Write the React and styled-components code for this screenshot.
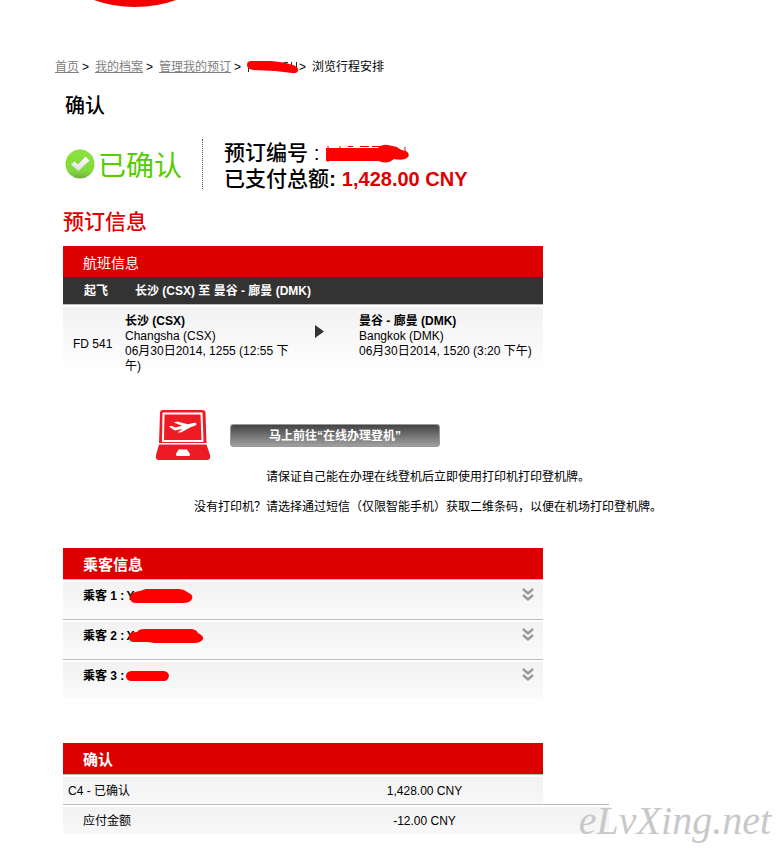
import React, { useState } from 'react'
import styled, { createGlobalStyle } from 'styled-components'

const passengers = [
  { id: 1, width: 66, height: 16, initial: 'Y', path: 'M8 15 Q2 15 2 9 Q3 4 12 3 L18 1 H50 Q56 1 59 4 Q66 7 64 11 Q62 15 55 15Z' },
  { id: 2, width: 76, height: 16, initial: 'X', path: 'M5 14 Q0 13 1 7 Q2 4 9 4 Q11 1 16 1 H64 Q69 2 70 5 Q76 8 75 11 Q73 15 66 15 H26 Q22 14 18 14Z' },
  { id: 3, width: 43, height: 10, initial: '', path: 'M5 0 H38 Q43 1 43 5 Q42 10 38 10 H6 Q0 10 0 5 Q0 1 5 0Z' },
]

function Redacted({ width, height, path, marks, ink }) {
  return (
    <Scribble width={width} height={height} viewBox={`0 0 ${width} ${height}`} aria-hidden="true">
      {marks && <path d={marks} stroke={ink} fill="none" />}
      <path d={path} fill="#f00" />
    </Scribble>
  )
}

function CheckIcon() {
  return (
    <svg width="31" height="31" viewBox="0 0 31 31" aria-hidden="true">
      <defs>
        <linearGradient id="ball" x1="0" y1="0" x2="0" y2="1">
          <stop offset="0" stopColor="#8be43c" />
          <stop offset="0.75" stopColor="#83d83a" />
          <stop offset="1" stopColor="#71a94c" />
        </linearGradient>
        <linearGradient id="tick" x1="0" y1="0" x2="0" y2="1">
          <stop offset="0" stopColor="#fff" />
          <stop offset="1" stopColor="#ddd" />
        </linearGradient>
      </defs>
      <circle cx="15" cy="15" r="14.5" fill="url(#ball)" />
      <path d="M5.5 15.5 L9.5 12 L13 15 L20.500 7 L25 11.500 L13.500 22.500Z" fill="url(#tick)" stroke="#79c73a" strokeWidth="0.6" />
    </svg>
  )
}

function LaptopIcon() {
  return (
    <svg width="56" height="50" viewBox="0 0 56 50" aria-hidden="true">
      <path d="M8 0 H47 Q50.500 0 50.500 3 L51.500 33 H4 L5 3 Q5 0 8 0Z" fill="#ed1c24" />
      <path d="M8.500 3.500 H46.500 L47.500 31 H8Z" fill="none" stroke="#fff" strokeWidth="2" />
      <path d="M14 16.800 Q15 15.500 17.500 16.200 L20.500 17.600 L27 15.800 L18.800 12.600 Q20 11.300 23 11.800 L33 14.200 L38 12.900 Q41.800 12.500 41.500 14.300 Q41 15.800 36 17 L26.500 22.200 Q24 22.800 22.800 22.200 L27.500 18.900 L20 20.500Z" fill="#fff" />
      <path d="M4 34.500 H51.500 L55 45 Q56 50 52 50 H4 Q0 50 1 45Z" fill="#ed1c24" />
      <path d="M23.500 39.500 H32 L35 44 Q35.500 46 33 46 H22.500 Q20.500 46 21 44Z" fill="#fff" />
    </svg>
  )
}

function App() {
  const [open, setOpen] = useState(null)

  return (
    <>
      <GlobalStyle />
      <Page>
        <LogoEdge width="84" height="8" viewBox="0 0 84 8" aria-hidden="true">
          <path d="M1 0 Q20 7 42 7 Q64 7 83 0Z" fill="#f00000" />
        </LogoEdge>

        <Breadcrumb>
          <CrumbLink href="#home">首页</CrumbLink>
          <Separator>&gt;</Separator>
          <CrumbLink href="#profile">我的档案</CrumbLink>
          <Separator>&gt;</Separator>
          <CrumbLink href="#bookings">管理我的预订</CrumbLink>
          <Separator>&gt;</Separator>
          <Redacted
            width={52}
            height={14}
            ink="#225"
            marks="M1.500 8 V12 M37 2.500 H41 M44.500 2 V5 M49.500 2 V10"
            path="M4 1 H24 Q38 2 46 5 Q52 7 51 11 Q49 14 45 13 L28 11 L6 10 Q0 9 0 5 Q0 1 4 1Z"
          />
          <Separator $tight>&gt;</Separator>
          <span>浏览行程安排</span>
        </Breadcrumb>

        <Main>
          <Title>确认</Title>
          <Status>
            <Confirmed>
              <CheckIcon />
              <span>已确认</span>
            </Confirmed>
            <Summary>
              <div>
                预订编号 :{' '}
                <Redacted
                  width={84}
                  height={20}
                  ink="#d00"
                  marks="M2 2 V18 M14 2 V6 M22 2.500 H27 M34 2.500 H43 M46 2.500 H54 M79 3 V9"
                  path="M0 4 H38 L52 4 Q56 0 62 1 L71 3 Q74 6 80 7 Q85 10 81 14 Q77 17 68 15 Q61 21 53 17 H20 L0 17Z"
                />
              </div>
              <div>
                已支付总额<b>:</b> <Paid>1,428.00 CNY</Paid>
              </div>
            </Summary>
          </Status>

          <SectionTitle>预订信息</SectionTitle>
          <FlightTable>
            <colgroup>
              <col width="62" />
              <col width="174" />
              <col width="60" />
              <col />
            </colgroup>
            <thead>
              <tr>
                <RedHead colSpan={4} $light>航班信息</RedHead>
              </tr>
              <tr>
                <DarkHead>起飞</DarkHead>
                <DarkHead colSpan={3} $wide>长沙 (CSX) 至 曼谷 - 廊曼 (DMK)</DarkHead>
              </tr>
            </thead>
            <tbody>
              <tr>
                <FlightNo>FD 541</FlightNo>
                <FlightCell>
                  <b>长沙 (CSX)</b>
                  <div>Changsha (CSX)</div>
                  <div>06月30日2014, 1255 (12:55 下午)</div>
                </FlightCell>
                <FlightCell>
                  <Arrow width="10" height="14" viewBox="0 0 10 14" aria-hidden="true">
                    <path d="M0 0 L9 6.500 L0 13Z" fill="#333" />
                  </Arrow>
                </FlightCell>
                <FlightCell>
                  <b>曼谷 - 廊曼 (DMK)</b>
                  <div>Bangkok (DMK)</div>
                  <div>06月30日2014, 1520 (3:20 下午)</div>
                </FlightCell>
              </tr>
            </tbody>
          </FlightTable>

          <CheckIn>
            <LaptopIcon />
            <CheckInButton type="button">马上前往“在线办理登机”</CheckInButton>
          </CheckIn>
          <Notes>
            <p>请保证自己能在办理在线登机后立即使用打印机打印登机牌。</p>
            <p>没有打印机？请选择通过短信（仅限智能手机）获取二维条码，以便在机场打印登机牌。</p>
          </Notes>

          <Passengers>
            <BarTitle>乘客信息</BarTitle>
            {passengers.map((p) => (
              <PassengerRow
                key={p.id}
                type="button"
                aria-expanded={open === p.id}
                onClick={() => setOpen(open === p.id ? null : p.id)}
              >
                <PassengerName>
                  乘客 {p.id} :
                  {p.initial && <Initial>{p.initial}</Initial>}
                  <Redacted width={p.width} height={p.height} path={p.path} />
                </PassengerName>
                <svg width="12" height="14" viewBox="0 0 12 14" aria-hidden="true">
                  <path d="M1 1 L6 5.500 L11 1 M1 7 L6 11.500 L11 7" fill="none" stroke="#999" strokeWidth="2.4" />
                </svg>
              </PassengerRow>
            ))}
          </Passengers>

          <PaymentTable>
            <colgroup>
              <col width="243" />
              <col width="237" />
              <col />
            </colgroup>
            <thead>
              <tr>
                <RedHead colSpan={2}>确认</RedHead>
              </tr>
            </thead>
            <tbody>
              <tr>
                <PayCell>C4 - 已确认</PayCell>
                <PayCell $center>1,428.00 CNY</PayCell>
              </tr>
              <tr>
                <PayCell $indent>应付金额</PayCell>
                <PayCell $center>-12.00 CNY</PayCell>
                <PayCell />
              </tr>
            </tbody>
          </PaymentTable>
        </Main>
        <Watermark>eLvXing.net</Watermark>
      </Page>
    </>
  )
}

const GlobalStyle = createGlobalStyle`
  * {
    box-sizing: border-box;
  }
  body {
    margin: 0;
    background: #fff;
    color: #000;
    font: 12px/16px "Liberation Sans", "Noto Sans CJK SC", sans-serif;
  }
  h1, h2, p {
    margin: 0;
  }
  table {
    border-collapse: separate;
    border-spacing: 0;
    table-layout: fixed;
  }
`

const Page = styled.div`
  position: relative;
  padding-bottom: 19px;
`

const LogoEdge = styled.svg`
  display: block;
  margin-left: 93px;
`

const Scribble = styled.svg`
  flex: none;
  vertical-align: middle;
`

const Breadcrumb = styled.nav`
  display: flex;
  align-items: center;
  margin: 51px 0 0 55px;
`

const CrumbLink = styled.a`
  color: #808080;
`

const Separator = styled.span`
  margin: 0 6px 0 ${(props) => (props.$tight ? '0' : '3px')};
`

const Main = styled.main`
  padding-left: 63px;
`

const Title = styled.h1`
  margin: 19px 0 0 2px;
  font-size: 20px;
  line-height: 24px;
  font-weight: 500;
`

const Status = styled.div`
  display: flex;
  align-items: flex-start;
  margin: 21px 0 0 2px;
`

const Confirmed = styled.div`
  display: flex;
  align-items: center;
  gap: 2px;
  height: 50px;
  padding-right: 20px;
  border-right: 1px dotted #555;
  color: #5c0;
  font-size: 28px;

  span {
    padding-top: 6px;
  }
`

const Summary = styled.div`
  padding: 1px 0 0 21px;
  font-size: 21px;
  line-height: 26px;
  font-weight: 500;
`

const Paid = styled.strong`
  color: #d00;
  font-size: 20px;
`

const SectionTitle = styled.h2`
  margin: 18px 0 12px;
  color: #d00;
  font-size: 21px;
  line-height: 24px;
  font-weight: 500;
`

const FlightTable = styled.table`
  width: 100%;
  max-width: 480px;
`

const RedHead = styled.th`
  height: 31px;
  padding: 2px 20px 0;
  background: #d00;
  color: #fff;
  text-align: left;
  font-size: ${(props) => (props.$light ? '14px' : '15px')};
  font-weight: ${(props) => (props.$light ? 400 : 700)};
`

const DarkHead = styled.th`
  height: 27px;
  padding: ${(props) => (props.$wide ? '0 10px' : '0 0 0 4px')};
  background: #333;
  color: #fff;
  text-align: ${(props) => (props.$wide ? 'left' : 'center')};
`

const FlightCell = styled.td`
  padding: 9px 0 2px;
  border-top: 1px solid #bbb;
  background: linear-gradient(#fff 2px, #f2f2f2 2px, #fff);
  line-height: 15px;
  vertical-align: top;
`

const FlightNo = styled(FlightCell)`
  padding-left: 10px;
  vertical-align: middle;
`

const Arrow = styled.svg`
  display: block;
  margin: 11px 0 0 16px;
`

const CheckIn = styled.div`
  display: flex;
  align-items: center;
  gap: 19px;
  margin: 34px 0 0 92px;
`

const CheckInButton = styled.button`
  width: 210px;
  height: 23px;
  padding: 1px 0 0;
  border: 1px solid #999;
  border-radius: 3px;
  background: linear-gradient(#444, #a0a0a0);
  color: #fff;
  font: inherit;
  font-weight: bold;
  line-height: 20px;
  cursor: pointer;
`

const Notes = styled.div`
  display: grid;
  gap: 14px;
  width: fit-content;
  margin: 9px 0 0 131px;
  text-align: center;
`

const Passengers = styled.section`
  max-width: 480px;
  margin-top: 33px;
`

const BarTitle = styled.h2`
  padding: 2px 20px 0;
  background: #d00;
  color: #fff;
  font-size: 15px;
  line-height: 29px;
`

const PassengerRow = styled.button`
  display: flex;
  justify-content: space-between;
  align-items: flex-start;
  width: 100%;
  height: 40px;
  padding: 8px 9px 0 20px;
  border: 0;
  border-top: 1px solid #bbb;
  background: linear-gradient(#fff 2px, #f2f2f2 2px, #fbfbfb);
  color: #000;
  font: inherit;
  font-weight: bold;
  text-align: left;
  cursor: pointer;
`

const PassengerName = styled.span`
  display: flex;
  align-items: center;
  gap: 2px;
  white-space: pre;
`

const Initial = styled.span`
  margin-right: -8px;
`

const PaymentTable = styled.table`
  width: 100%;
  max-width: 546px;
  margin-top: 44px;
`

const PayCell = styled.td`
  height: 30px;
  padding: 2px 0 0 ${(props) => (props.$center ? '0' : props.$indent ? '20px' : '5px')};
  border-top: 1px solid #bbb;
  background: linear-gradient(#fff 2px, #f2f2f2 2px, #f8f8f8);
  text-align: ${(props) => (props.$center ? 'center' : 'left')};
`

const Watermark = styled.div`
  position: absolute;
  right: 12px;
  bottom: 10px;
  color: #c8c8c8;
  font: italic 40px/44px "Liberation Serif", serif;
  pointer-events: none;
`

export default App
